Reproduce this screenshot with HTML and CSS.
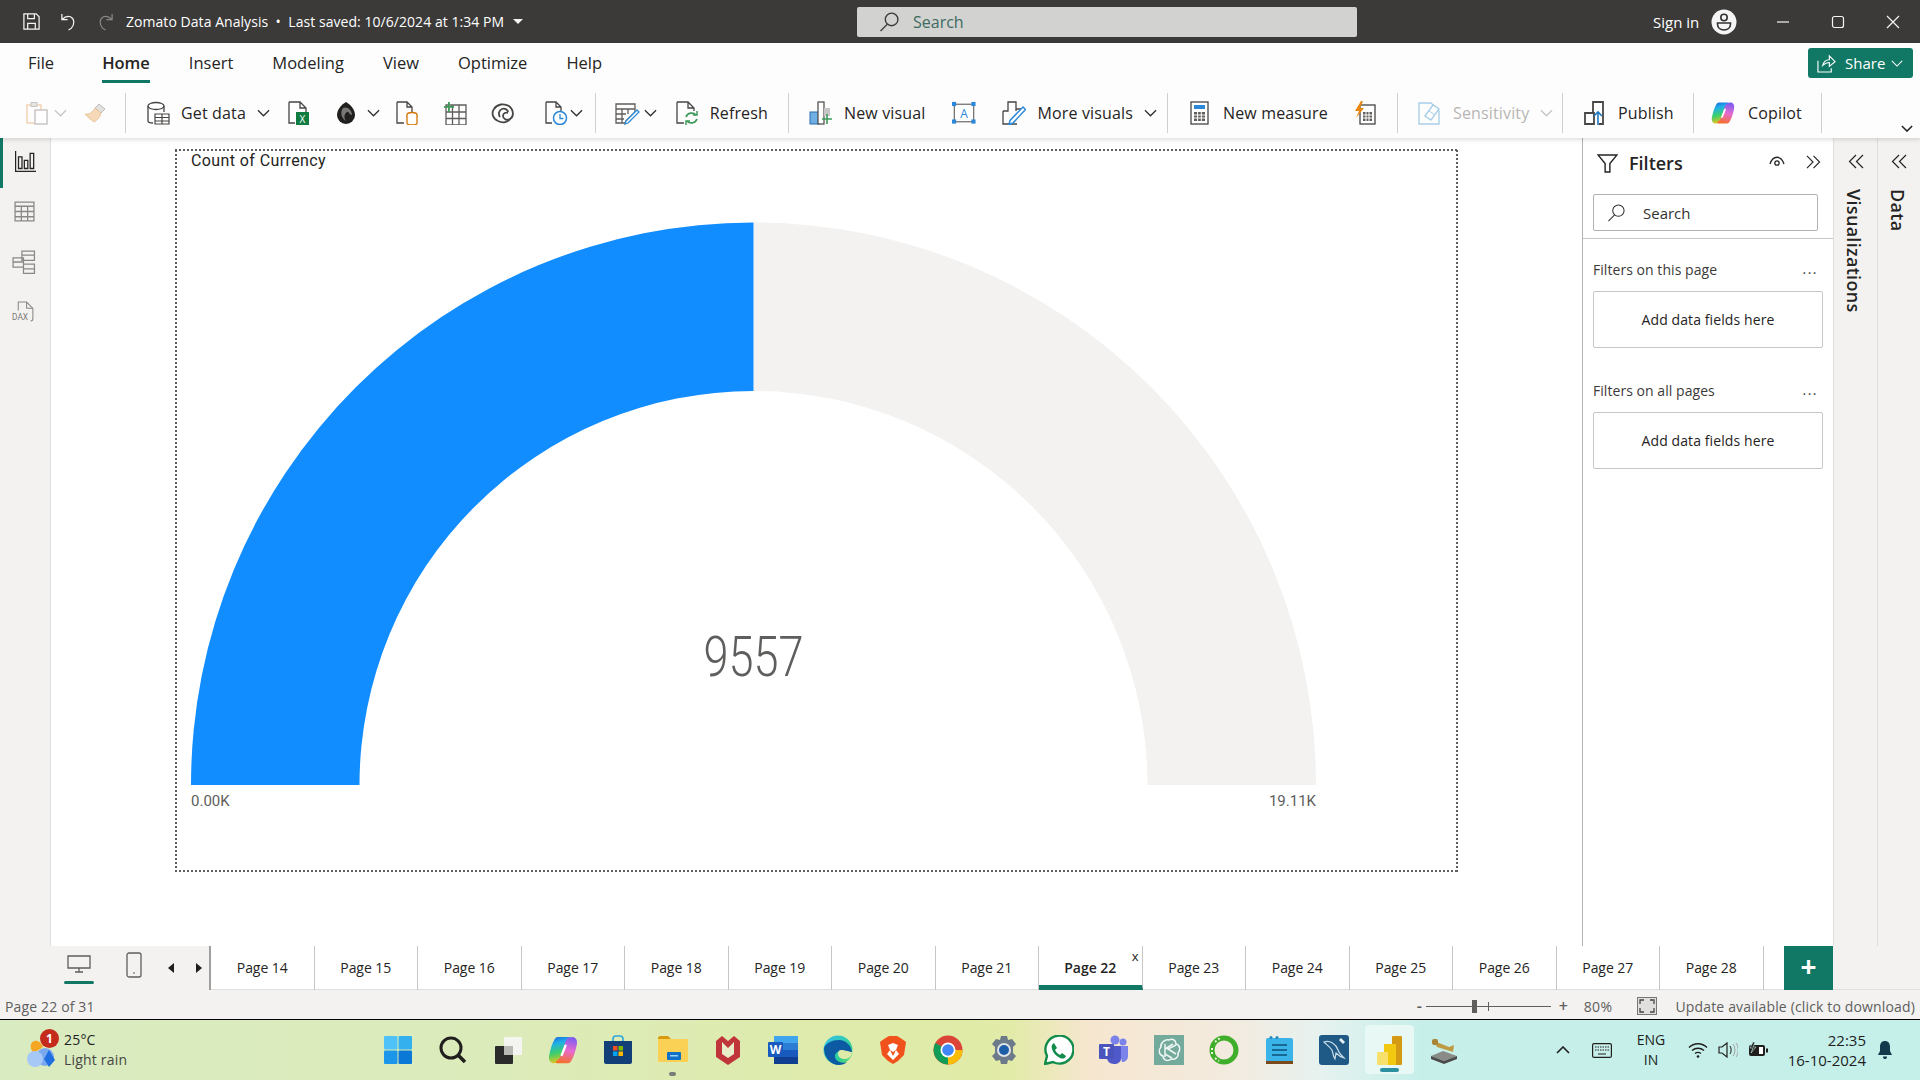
FILE: index.html
```html
<!DOCTYPE html>
<html lang="en">
<head>
    <meta charset="UTF-8">
    <title>Zomato Data Analysis</title>
    <link rel="stylesheet" href="styles.css">
</head>
<body>
    <!-- Title bar -->
    <header class="titlebar">
        <div class="title-left">
            <svg class="ic-save" viewBox="0 0 20 20"><path d="M2 2h13l3 3v13H2zM6 2v5h7V2M6 18v-6h8v6"/></svg>
            <svg class="ic-undo" viewBox="0 0 20 20"><path d="M2 2v6h6M2 8c3-3 6-4 9-3 4 2 5 7 1 12l-3 2"/></svg>
            <svg class="ic-redo" viewBox="0 0 20 20"><path d="M18 2v6h-6M18 8c-3-3-6-4-9-3-4 2-5 7-1 12l3 2"/></svg>
            <span class="doc-title">Zomato Data Analysis &nbsp;•&nbsp; Last saved: 10/6/2024 at 1:34 PM</span>
            <span class="caret"></span>
        </div>
        <div class="top-search">
            <svg viewBox="0 0 20 20"><circle cx="12" cy="8" r="6"/><path d="M8 12.500 1.500 19"/></svg>
            <span>Search</span>
        </div>
        <div class="title-right">
            <span class="signin">Sign in</span>
            <svg class="ic-user" viewBox="0 0 26 26"><circle cx="13" cy="13" r="12.500" fill="#f5f5f5"/><circle cx="13" cy="8.500" r="3.200" fill="none" stroke="#323130" stroke-width="1.600"/><path d="M6.500 14h13v1c0 4-3 6-6.500 6s-6.500-2-6.500-6z" fill="none" stroke="#323130" stroke-width="1.600"/></svg>
            <div class="win-btns">
                <svg viewBox="0 0 14 14"><path d="M1 7h12"/></svg>
                <svg viewBox="0 0 14 14"><rect x="1.500" y="1.500" width="11" height="11" rx="2"/></svg>
                <svg viewBox="0 0 14 14"><path d="M1 1l12 12M13 1 1 13"/></svg>
            </div>
        </div>
    </header>

    <!-- Ribbon -->
    <section class="ribbon">
        <nav class="menu">
            <a class="first">File</a>
            <a class="active">Home</a>
            <a>Insert</a>
            <a>Modeling</a>
            <a>View</a>
            <a>Optimize</a>
            <a>Help</a>
            <button class="share">
                <svg viewBox="0 0 20 20"><path d="M6 12c1-4 4-6 7-6V2l6 6-6 5V9c-3 0-5 1-7 3zM1 7v12h14v-4"/></svg>
                Share
                <svg class="share-chev" viewBox="0 0 14 8"><path d="M1 1l6 6 6-6"/></svg>
            </button>
        </nav>
        <div class="toolbar">
            <div class="group g1">
                <div class="tool close">
                    <svg class="icon" viewBox="0 0 24 24"><path d="M2 4h14v18H2z" fill="none" stroke="#f2d3b3" stroke-width="1.500"/><rect x="6" y="1.500" width="6" height="4" fill="#e6e4e2" stroke="#c8c6c4"/><rect x="10" y="9" width="12" height="14" fill="#fff" stroke="#c8c6c4" stroke-width="1.500"/></svg>
                    <svg class="chev off" viewBox="0 0 14 8"><path d="M1 1l6 6 6-6"/></svg>
                </div>
                <svg class="icon" viewBox="0 0 24 24"><path d="M15 3l6 5-4 4-6-5z" fill="#e3e1df" stroke="#bfbdbb"/><path d="M11 7l6 5c-1 5-4 7-7 9-2-2-6-4-9-8 4 1 8-2 10-6z" fill="#f6d9b8" stroke="#eac49a"/></svg>
            </div>
            <div class="sep near"></div>
            <div class="group g2">
                <div class="tool">
                    <svg class="icon" viewBox="0 0 24 24"><ellipse cx="10" cy="5" rx="8" ry="3.500" fill="#fff" stroke="#484644" stroke-width="1.300"/><path d="M2 5v15c0 1 1 2 5 2M18 5v6" fill="none" stroke="#484644" stroke-width="1.300"/><path d="M9 13h14v10H9zM9 16.500h14M9 20h14M16 13v10" fill="#fff" stroke="#484644" stroke-width="1.200"/></svg>
                    <span>Get data</span>
                    <svg class="chev" viewBox="0 0 14 8"><path d="M1 1l6 6 6-6"/></svg>
                </div>
                <svg class="icon at-excel" viewBox="0 0 24 24"><path d="M3 1h11l6 6v7M3 1v21h6M14 1v6h6" fill="none" stroke="#484644" stroke-width="1.300"/><rect x="10" y="11" width="13" height="13" fill="#107c41"/><text class="ic-text" x="16.500" y="21.500" fill="#fff" font-size="10">X</text></svg>
                <div class="tool tight at-lake">
                    <svg class="icon" viewBox="0 0 24 24"><path d="M12 1c5 3 9 8 9 13a9 9 0 0 1-18 0C3 9 7 4 12 1z" fill="#201f1e"/><path d="M9 7c4-2 9 2 9 7-3 0-3-4-5-3s-4 5-1 9c-5-3-6-9-3-13z" fill="#797775"/></svg>
                    <svg class="chev" viewBox="0 0 14 8"><path d="M1 1l6 6 6-6"/></svg>
                </div>
                <svg class="icon at-sql" viewBox="0 0 24 24"><path d="M2 1h10l5 5v5M2 1v21h7M12 1v5h5" fill="none" stroke="#484644" stroke-width="1.300"/><ellipse cx="17" cy="14" rx="5" ry="2.500" fill="#fff" stroke="#d47500" stroke-width="1.300"/><path d="M12 14v8c0 1 2 2 5 2s5-1 5-2v-8" fill="#fff" stroke="#d47500" stroke-width="1.300"/></svg>
                <svg class="icon at-table" viewBox="0 0 24 24"><path d="M3 4h20v20H3zM3 11h20M3 17.500h20M9.500 4v20M16 4v20" fill="none" stroke="#5f5e5c" stroke-width="1.300"/><rect x="1" y="5" width="10" height="1.800" fill="#3f9a5b"/><rect x="5" y="1" width="1.800" height="10" fill="#3f9a5b"/></svg>
                <svg class="icon at-verse" viewBox="0 0 24 24"><path d="M7 20C2 18 0 12 3 8c3-5 10-6 15-3 5 4 5 11 1 13-3 2-7 0-7-3 0-3 3-4 5-3" fill="none" stroke="#484644" stroke-width="1.800"/><path d="M9 16c-2-3-1-7 2-8 3-1 6 1 6 3M7 20c4 2 9 2 12-2" fill="none" stroke="#484644" stroke-width="1.800"/></svg>
                <div class="tool tighter at-recent">
                    <svg class="icon" viewBox="0 0 24 24"><path d="M2 1h10l5 5v4M2 1v21h6M12 1v5h5" fill="none" stroke="#484644" stroke-width="1.300"/><circle cx="16" cy="17" r="6.500" fill="#fff" stroke="#2b88d8" stroke-width="1.500"/><path d="M16 13v4.500h3.500" fill="none" stroke="#2b88d8" stroke-width="1.300"/></svg>
                    <svg class="chev" viewBox="0 0 14 8"><path d="M1 1l6 6 6-6"/></svg>
                </div>
            </div>
            <div class="sep tight"></div>
            <div class="group g3">
                <svg class="icon wide" viewBox="0 0 26 24"><path d="M2 3h19v8l-9 9-1 2H2zM2 8h19M2 13h10M2 18h8M8 8v14M14 8v5" fill="none" stroke="#605e5c" stroke-width="1.300"/><path d="M23 9l2 2-11 11-3 1 1-3z" fill="#fff" stroke="#2b88d8" stroke-width="1.300"/></svg>
            </div>
            <div class="group g3b">
                <svg class="chev" viewBox="0 0 14 8"><path d="M1 1l6 6 6-6"/></svg>
                <div class="tool">
                    <svg class="icon" viewBox="0 0 24 24"><path d="M2 1h11l6 6v3M2 1v21h7M13 1v6h6" fill="none" stroke="#484644" stroke-width="1.300"/><path d="M11 16a6 6 0 0 1 10-2M22 18a6 6 0 0 1-10 2" fill="none" stroke="#3f9a5b" stroke-width="1.800"/><path d="M22 10v4h-4M11 24v-4h4" fill="none" stroke="#3f9a5b" stroke-width="1.500"/></svg>
                    <span>Refresh</span>
                </div>
            </div>
            <div class="sep"></div>
            <div class="group g4">
                <div class="tool">
                    <svg class="icon" viewBox="0 0 24 24"><rect x="1" y="11" width="9" height="12" fill="#6fb0e4" stroke="#2b6cb0"/><rect x="9" y="1" width="6" height="22" fill="#fff" stroke="#484644" stroke-width="1.200"/><rect x="15" y="7" width="6" height="8" fill="#c8c6c4"/><path d="M18 13v10M13 18h10" stroke="#3f9a5b" stroke-width="1.600"/></svg>
                    <span>New visual</span>
                </div>
                <svg class="icon" viewBox="0 0 26 24"><rect x="2.500" y="2.500" width="21" height="19" fill="#fff" stroke="#605e5c" stroke-width="1.200"/><rect x="0" y="0" width="4.500" height="4.500" fill="#2b88d8"/><rect x="21" y="0" width="4.500" height="4.500" fill="#2b88d8"/><rect x="0" y="19" width="4.500" height="4.500" fill="#2b88d8"/><rect x="21" y="19" width="4.500" height="4.500" fill="#2b88d8"/><text class="ic-text" x="13" y="17" fill="#2b88d8" font-size="13">A</text></svg>
                <div class="tool">
                    <svg class="icon" viewBox="0 0 24 24"><path d="M1 10h5V1h8v9M1 10v13h14M14 8h7" fill="none" stroke="#484644" stroke-width="1.300"/><path d="M21 6l2.500 2.500L11 22l-4 1.500 1-4z" fill="#fff" stroke="#2b88d8" stroke-width="1.500"/></svg>
                    <span>More visuals</span>
                    <svg class="chev" viewBox="0 0 14 8"><path d="M1 1l6 6 6-6"/></svg>
                </div>
            </div>
            <div class="sep tight"></div>
            <div class="group g5">
                <div class="tool">
                    <svg class="icon" viewBox="0 0 20 24"><rect x="1" y="1" width="17" height="22" fill="#fff" stroke="#484644" stroke-width="1.300"/><rect x="4" y="4" width="11" height="4" fill="#2b88d8"/><path d="M4 11h11v9H4z" fill="#605e5c"/><path d="M7.600 11v9M11.300 11v9M4 14h11M4 17h11" stroke="#fff"/></svg>
                    <span>New measure</span>
                </div>
                <svg class="icon" viewBox="0 0 24 24"><rect x="7" y="4" width="15" height="19" fill="#fff" stroke="#484644" stroke-width="1.300"/><path d="M10 11h9v9h-9z" fill="#605e5c"/><path d="M13 11v9M16 11v9M10 14h9M10 17h9" stroke="#fff"/><path d="M8 0 2 10h4l-3 7 8-10H7l3-7z" fill="#e8870f"/></svg>
            </div>
            <div class="sep"></div>
            <div class="group g6">
                <div class="tool dim">
                    <svg class="icon" viewBox="0 0 24 24"><path d="M1 2h12l8 8v13H1z" fill="none" stroke="#a6cde8" stroke-width="1.300"/><path d="M7 15 15 4l6 4-8 11z" fill="#fff" stroke="#a6cde8" stroke-width="1.300"/><path d="M11 10l6 4" stroke="#a6cde8"/></svg>
                    <span>Sensitivity</span>
                    <svg class="chev off" viewBox="0 0 14 8"><path d="M1 1l6 6 6-6"/></svg>
                </div>
            </div>
            <div class="sep tight"></div>
            <div class="group g7">
                <div class="tool">
                    <svg class="icon" viewBox="0 0 24 24"><path d="M10 12V1h10v22h-4M2 12h9v11H2z" fill="#fff" stroke="#484644" stroke-width="1.800"/><path d="M15 24V11M11 15l4-4 4 4" fill="none" stroke="#1f78c1" stroke-width="1.600"/></svg>
                    <span>Publish</span>
                </div>
            </div>
            <div class="sep"></div>
            <div class="group g8">
                <div class="tool wider">
                    <svg class="icon" viewBox="0 0 24 24">
                        <defs>
                            <linearGradient id="cp1" x1="0.300" y1="0" x2="0.500" y2="1"><stop offset="0" stop-color="#1c6fe0"/><stop offset="0.250" stop-color="#1fb0e8"/><stop offset="0.600" stop-color="#3ecf6a"/><stop offset="1" stop-color="#f5c518"/></linearGradient>
                            <linearGradient id="cp2" x1="0.600" y1="0" x2="0.400" y2="1"><stop offset="0" stop-color="#7a5cf0"/><stop offset="0.500" stop-color="#e86ad0"/><stop offset="1" stop-color="#f5702c"/></linearGradient>
                        </defs>
                        <path d="M8 1.500h9c1 0 1 1.500 0 2-2 1-3 3-4 6L10 19c-1 2.500-3 3.500-5.500 3.500S0 20 1 16c1-5 2.500-9.500 4-12 .7-1.500 1.500-2.500 3-2.500z" fill="url(#cp1)"/>
                        <path d="M16 22.500H7c-1 0-1-1.500 0-2 2-1 3-3 4-6L14 5c1-2.500 3-3.500 5.500-3.500S24 4 23 8c-1 5-2.500 9.500-4 12-.7 1.500-1.500 2.500-3 2.500z" fill="url(#cp2)"/>
                        <path d="M14 8.500 11 16" stroke="#fff" stroke-width="1.800" stroke-linecap="round"/>
                    </svg>
                    <span>Copilot</span>
                </div>
            </div>
            <div class="sep"></div>
        </div>
        <svg class="ribbon-collapse" viewBox="0 0 14 8"><path d="M1 1l6 6 6-6"/></svg>
    </section>

    <!-- Main work area -->
    <main class="workarea">
        <aside class="rail">
            <div class="rail-item on">
                <svg viewBox="0 0 18 18"><path d="M.5 0v17.500H18M3 5h3v10H3zM8 8h3v7H8zM13 2h3v13h-3z" fill="none" stroke="#252423" stroke-width="1.100"/></svg>
            </div>
            <div class="rail-item">
                <svg viewBox="0 0 20 20"><path d="M1 1h18v18H1zM1 5h18M1 10h18M1 15h18M7 5v14M13 5v14" fill="none" stroke="#8a8886" stroke-width="1.200"/></svg>
            </div>
            <div class="rail-item">
                <svg class="big" viewBox="0 0 23 23"><path d="M9.500 1h12v9h-12zM9.500 5h12M1 7.500h10v9H1zM1 11.500h10M11 13.500h10.500V22.500H11zM11 18h10.500" fill="#f3f2f1" stroke="#8a8886" stroke-width="1.200"/></svg>
            </div>
            <div class="rail-item">
                <svg class="big" viewBox="0 0 23 21"><path d="M6 9V1h8l6 6v10c0 1-1 2-2 2" fill="none" stroke="#8a8886"/><path d="M14 1v6h6" fill="none" stroke="#8a8886"/><text class="ic-dax" x="0" y="18" fill="#797775">DAX</text></svg>
            </div>
        </aside>
        <div class="canvas">
            <div class="visual">
                <div class="visual-title">Count of Currency</div>
                <div class="gauge">
                    <svg class="gauge-arc" viewBox="0 0 1125 563">
                        <path d="M562.500 .5A562.500 562.500 0 0 1 1125 563H956.500A394 394 0 0 0 562.500 169z" fill="#f3f2f1"/>
                        <path d="M562.500 .5A562.500 562.500 0 0 0 0 563H168.500A394 394 0 0 1 562.500 169z" fill="#118dff"/>
                    </svg>
                    <div class="gauge-value">9557</div>
                </div>
                <div class="gauge-labels"><span>0.00K</span><span>19.11K</span></div>
            </div>
        </div>
        <aside class="filters">
            <div class="filters-head">
                <svg class="ic-funnel" viewBox="0 0 22 20"><path d="M1 1h20l-7.500 9v9h-5v-9z"/></svg>
                <span class="filters-title">Filters</span>
                <svg class="ic-eye" viewBox="0 0 16 10"><path d="M1 8c3-9 11-9 14 0"/><circle cx="8" cy="7" r="2.200"/></svg>
                <svg class="ic-dbl" viewBox="0 0 16 15"><path d="M1 1l6.500 6.500L1 14M8 1l6.500 6.500L8 14"/></svg>
            </div>
            <div class="filter-search">
                <svg viewBox="0 0 20 20"><circle cx="12" cy="8" r="6"/><path d="M8 12.500 1.500 19"/></svg>
                <span>Search</span>
            </div>
            <div class="filter-body">
                <div class="filter-sec">
                    <span>Filters on this page</span><b>...</b>
                </div>
                <div class="drop-box">Add data fields here</div>
                <div class="filter-sec second">
                    <span>Filters on all pages</span><b>...</b>
                </div>
                <div class="drop-box">Add data fields here</div>
            </div>
        </aside>
        <aside class="side-tab viz">
            <svg viewBox="0 0 16 15"><path d="M15 1 8.500 7.500 15 14M8 1 1.500 7.500 8 14"/></svg>
            <span>Visualizations</span>
        </aside>
        <aside class="side-tab data">
            <svg viewBox="0 0 16 15"><path d="M15 1 8.500 7.500 15 14M8 1 1.500 7.500 8 14"/></svg>
            <span>Data</span>
        </aside>
    </main>

    <!-- Page tabs -->
    <div class="pagebar">
        <div class="page-ctrl">
            <div class="layout-btn on">
                <svg viewBox="0 0 24 18"><path d="M1 1h22v12H1zM12 13v4M8 17h8" fill="none" stroke="#605e5c" stroke-width="1.300"/></svg>
            </div>
            <div class="layout-btn phone">
                <svg viewBox="0 0 16 26"><rect x="1" y="1" width="14" height="24" rx="2" fill="none" stroke="#605e5c" stroke-width="1.300"/><path d="M7 21h2" stroke="#605e5c"/></svg>
            </div>
            <span class="arrow left"></span>
            <span class="arrow right"></span>
        </div>
        <div class="tabs">
            <div class="tab">Page 14</div>
            <div class="tab">Page 15</div>
            <div class="tab">Page 16</div>
            <div class="tab">Page 17</div>
            <div class="tab">Page 18</div>
            <div class="tab">Page 19</div>
            <div class="tab">Page 20</div>
            <div class="tab">Page 21</div>
            <div class="tab current">Page 22<i>x</i></div>
            <div class="tab">Page 23</div>
            <div class="tab">Page 24</div>
            <div class="tab">Page 25</div>
            <div class="tab">Page 26</div>
            <div class="tab">Page 27</div>
            <div class="tab">Page 28</div>
        </div>
        <div class="add-page">+</div>
        <div class="pagebar-end"></div>
    </div>

    <!-- Status bar -->
    <footer class="statusbar">
        <span>Page 22 of 31</span>
        <div class="status-right">
            <span class="zoom-sign">-</span>
            <div class="slider"><i class="thumb"></i><i class="tick"></i></div>
            <span class="zoom-sign plus">+</span>
            <span class="zoom-pct">80%</span>
            <svg class="ic-fit" viewBox="0 0 20 18"><rect x="0.500" y="0.500" width="19" height="17" fill="#e1dfdd" stroke="#797775"/><path d="M3 7V3h4M13 3h4v4M17 11v4h-4M7 15H3v-4" fill="none" stroke="#484644" stroke-width="1.300"/></svg>
            <span>Update available (click to download)</span>
        </div>
    </footer>

    <!-- Windows taskbar -->
    <div class="taskbar">
        <div class="weather">
            <svg class="ic-weather" viewBox="0 0 32 36"><path d="M6 12a9 9 0 0 0 3 9l9-6C16 9 9 6 6 12z" fill="#f5a623"/><circle cx="20" cy="25" r="9" fill="#7aa9ee"/><circle cx="10" cy="27" r="8" fill="#a6c8f7"/><path d="M24 18l6 10-6 7-5-8z" fill="#1f6fe0"/></svg>
            <span class="badge">1</span>
            <div class="weather-text">
                <span>25°C</span>
                <span class="sub">Light rain</span>
            </div>
        </div>
        <div class="apps">
            <div class="app"><svg viewBox="0 0 30 30"><rect x="1" y="1" width="13.500" height="13.500" rx="1" fill="#4fc3f7"/><rect x="15.500" y="1" width="13.500" height="13.500" rx="1" fill="#35b0ee"/><rect x="1" y="15.500" width="13.500" height="13.500" rx="1" fill="#1c96e8"/><rect x="15.500" y="15.500" width="13.500" height="13.500" rx="1" fill="#0a78d7"/></svg></div>
            <div class="app"><svg viewBox="0 0 30 30"><circle cx="13" cy="13" r="10" fill="none" stroke="#201f1e" stroke-width="3"/><path d="M20 20l7 7" stroke="#201f1e" stroke-width="3.500"/></svg></div>
            <div class="app"><svg viewBox="0 0 30 30"><rect x="11" y="2" width="18" height="18" rx="1" fill="#f4f4f0"/><rect x="2" y="11" width="18" height="18" rx="1" fill="#2b2b2b"/><rect x="11" y="11" width="9" height="9" fill="#b8b8b4"/></svg></div>
            <div class="app"><svg viewBox="0 0 24 24"><path d="M8 1.500h9c1 0 1 1.500 0 2-2 1-3 3-4 6L10 19c-1 2.500-3 3.500-5.500 3.500S0 20 1 16c1-5 2.500-9.500 4-12 .7-1.500 1.500-2.500 3-2.500z" fill="url(#cp1)"/><path d="M16 22.500H7c-1 0-1-1.500 0-2 2-1 3-3 4-6L14 5c1-2.500 3-3.500 5.500-3.500S24 4 23 8c-1 5-2.500 9.500-4 12-.7 1.500-1.500 2.500-3 2.500z" fill="url(#cp2)"/><path d="M14 8.500 11 16" stroke="#fff" stroke-width="1.800" stroke-linecap="round"/></svg></div>
            <div class="app"><svg viewBox="0 0 30 30"><path d="M10 8V4c0-2 1-3 3-3h4c2 0 3 1 3 3v4" fill="none" stroke="#2aa7e0" stroke-width="1.600"/><path d="M1 6h28v21c0 1-1 2-2 2H3c-1 0-2-1-2-2z" fill="#123f77"/><rect x="10" y="11" width="4.500" height="4.500" fill="#f25022"/><rect x="15.500" y="11" width="4.500" height="4.500" fill="#7fba00"/><rect x="10" y="16.500" width="4.500" height="4.500" fill="#00a4ef"/><rect x="15.500" y="16.500" width="4.500" height="4.500" fill="#ffb900"/></svg></div>
            <div class="app running"><svg viewBox="0 0 30 30"><path d="M0 3c0-1 1-2 2-2h8l3 3H0z" fill="#d99a10"/><path d="M0 4h30v23H0z" fill="#fbd155"/><rect x="9" y="17" width="14" height="8" rx="1" fill="#1170c8"/><rect x="12" y="20" width="8" height="1.500" fill="#9bd0f5"/></svg></div>
            <div class="app"><svg viewBox="0 0 30 30"><path d="M3 6l6-5 6 5 6-5 6 5v16L15 30 3 22z" fill="#c0353a"/><path d="M9 7v12l6 4 6-4V7l-6 6z" fill="#e8ecc8"/></svg></div>
            <div class="app"><svg viewBox="0 0 30 30"><rect x="6" y="1" width="24" height="28" rx="2" fill="#2b7cd3"/><rect x="6" y="1" width="24" height="7" fill="#41a5ee"/><rect x="6" y="15" width="24" height="7" fill="#185abd"/><rect x="6" y="22" width="24" height="7" fill="#103f91"/><rect x="0" y="7" width="15" height="15" rx="1" fill="#185abd"/><text class="ic-text bold" x="7.500" y="19" fill="#fff" font-size="12">W</text></svg></div>
            <div class="app"><svg viewBox="0 0 30 30"><defs><linearGradient id="ed" x1="0" y1="0" x2="1" y2="1"><stop offset="0" stop-color="#35c1f1"/><stop offset="0.700" stop-color="#2fd08f"/><stop offset="1" stop-color="#7fdc6a"/></linearGradient></defs><circle cx="15" cy="15" r="14.500" fill="url(#ed)"/><path d="M1 13c0 10 7 17 15 17 3 0 6-1 8-3-6 2-12-1-12-6 0-3 3-5 6-5 5 0 10 2 11 2 0-7-6-13-13-13C9 5 3 8 1 13z" fill="#0c59a4"/><path d="M29 17c-2 0-7-2-11-2-2 0-3 2-3 4 0 3 3 5 7 5s7-3 7-7z" fill="#dfeaa9"/></svg></div>
            <div class="app"><svg viewBox="0 0 30 30"><path d="M6 4l5-3h8l5 3 4 3-2 13-6 6-5 3-5-3-6-6L2 7z" fill="#f1511b"/><path d="M10 10l5-2 5 2-2 5 3 4-6 6-6-6 3-4z" fill="#fff"/><path d="M12 15l3 2 3-2-3 6z" fill="#f1511b"/></svg></div>
            <div class="app"><svg viewBox="0 0 30 30"><circle cx="15" cy="15" r="14.500" fill="#db4437"/><path d="M15 15 2.400 8A14.500 14.500 0 0 0 15 29.500z" fill="#0f9d58"/><path d="M15 15v14.500A14.500 14.500 0 0 0 29.500 15z" fill="#fbbc05"/><circle cx="15" cy="15" r="7.500" fill="#fff"/><circle cx="15" cy="15" r="5.800" fill="#4285f4"/></svg></div>
            <div class="app"><svg viewBox="0 0 30 30"><path d="M12 1h6l1 4 4-1 4 5-3 3v6l3 3-4 5-4-1-1 4h-6l-1-4-4 1-4-5 3-3v-6L3 9l4-5 4 1z" fill="#6c7a89"/><circle cx="15" cy="15" r="7" fill="#dfe3e6"/><circle cx="15" cy="15" r="5" fill="#1c5fa8"/></svg></div>
            <div class="app"><svg viewBox="0 0 30 30"><path d="M1 29l2-8A14 14 0 1 1 9 27z" fill="#fff" stroke="#128c4b" stroke-width="2.400"/><path d="M10 8l3 5-2 2c1 2 3 4 5 5l2-2 4 3c-1 3-4 3-6 2-4-2-7-5-8-9-1-3 0-5 2-6z" fill="#128c4b"/></svg></div>
            <div class="app"><svg viewBox="0 0 30 30"><circle cx="24" cy="7" r="3.500" fill="#7b83eb"/><circle cx="16" cy="5" r="4.500" fill="#7b83eb"/><path d="M19 11h10v10c0 4-3 6-6 6z" fill="#7b83eb"/><path d="M8 11h14v12c0 4-3 6-7 6s-7-3-7-6z" fill="#5059c9"/><rect x="0" y="9" width="15" height="15" rx="1" fill="#4b53bc"/><text class="ic-text bold" x="7.500" y="21" fill="#fff" font-size="12">T</text></svg></div>
            <div class="app"><svg viewBox="0 0 30 30"><rect width="30" height="30" fill="#74aa9c"/><path d="M15 5c3-2 7 0 7 4 4 1 5 6 2 9 1 4-3 7-7 6-3 3-8 1-8-3-4-1-5-6-2-9-1-4 4-8 8-7zM11 9v10l7 4M19 9l-8 5v8M22 10l-8 4 8 5" fill="none" stroke="#eef6f3" stroke-width="1.500"/></svg></div>
            <div class="app"><svg viewBox="0 0 30 30"><circle cx="15" cy="15" r="12" fill="none" stroke="#3fae2a" stroke-width="5"/><path d="M6 7l5-4M3 13v6M6 23l4 3" stroke="#eaf3d8" stroke-width="2" stroke-dasharray="2 2"/></svg></div>
            <div class="app"><svg viewBox="0 0 30 30"><rect x="2" y="3" width="27" height="25" rx="2" fill="#3ab4e8"/><rect x="2" y="26" width="27" height="3" fill="#7a4a1c"/><circle cx="7" cy="2.500" r="1.500" fill="#2a88b8"/><circle cx="13" cy="2.500" r="1.500" fill="#2a88b8"/><path d="M8 10h15M8 15h15M8 20h15" stroke="#0e4f78" stroke-width="1.600"/></svg></div>
            <div class="app"><svg viewBox="0 0 30 30"><rect width="30" height="30" rx="3" fill="#1e5a85"/><path d="M5 7c6-2 12 2 14 8 1 3 3 5 6 8-4-1-6-3-8-5l-1 6c-2-3-2-6-3-9-2-3-5-5-8-8z" fill="none" stroke="#c9dbe6" stroke-width="1.200"/><path d="M22 3l4 4-2 2-4-4z" fill="#e8f0f4"/></svg></div>
            <div class="app active"><svg viewBox="0 0 30 30"><rect x="18" y="1" width="10" height="29" rx="1" fill="#d59a14"/><rect x="10" y="9" width="12" height="21" rx="1" fill="#f2c811"/><rect x="3" y="17" width="11" height="13" rx="1" fill="#f8e06c"/></svg></div>
            <div class="app"><svg viewBox="0 0 30 30"><path d="M2 21l12-5 14 5-13 5z" fill="#8a8a88"/><path d="M2 21v3l13 5 13-5v-3l-13 5z" fill="#4a4a48"/><path d="M5 6l15 6 5-2-1 7-16-5z" fill="#bf9a42"/><rect x="3" y="4" width="6" height="6" rx="2" fill="#a88434"/></svg></div>
        </div>
        <div class="tray">
            <svg class="ic-up" viewBox="0 0 14 8"><path d="M1 7l6-6 6 6"/></svg>
            <svg class="ic-kbd" viewBox="0 0 20 15"><rect x="0.600" y="0.600" width="18.800" height="13.800" rx="1.500" fill="none" stroke="#201f1e" stroke-width="1.200"/><path d="M3 4h14M3 7h14" stroke="#201f1e" stroke-dasharray="1.500 1"/><path d="M6 11h8" stroke="#201f1e"/></svg>
            <div class="lang"><span>ENG</span><span>IN</span></div>
            <svg class="ic-wifi" viewBox="0 0 20 16"><path d="M1 5.500c5-5 13-5 18 0M4 8.500c3.500-3 8.500-3 12 0M7 11.500c2-1.500 4-1.500 6 0" fill="none" stroke="#201f1e" stroke-width="1.400"/><circle cx="10" cy="14.500" r="1.300" fill="#201f1e"/></svg>
            <svg class="ic-vol" viewBox="0 0 20 16"><path d="M1 5v6h3l5 4V1L4 5z" fill="none" stroke="#201f1e" stroke-width="1.200"/><path d="M12 4c1.500 2 1.500 6 0 8" fill="none" stroke="#201f1e"/><path d="M15 2c2.500 3 2.500 9 0 12M18 1c3 4 3 10 0 14" fill="none" stroke="#a19f9d"/></svg>
            <svg class="ic-batt" viewBox="0 0 20 16"><rect x="1" y="3" width="16" height="11" rx="2" fill="#201f1e"/><rect x="11" y="5" width="4" height="7" fill="#fff"/><rect x="18" y="6.500" width="2" height="4" fill="#201f1e"/><path d="M5 0 2 6h3L3 11l5-6H5l2-5z" fill="#201f1e" stroke="#c5efe9" stroke-width="0.600"/></svg>
            <div class="clock"><span>22:35</span><span>16-10-2024</span></div>
            <svg class="ic-bell" viewBox="0 0 16 20"><path d="M8 1c-3 0-5 2-5 6v4l-2 4h14l-2-4V7c0-4-2-6-5-6z" fill="#123a4a"/><path d="M6 16.500h4c0 2-1 2.500-2 2.500s-2-.5-2-2.500z" fill="#123a4a"/></svg>
        </div>
    </div>
</body>
</html>
```

FILE: styles.css
```css
* {
    box-sizing: border-box;
    margin: 0;
    padding: 0;
}

html, body {
    width: 1920px;
    height: 1080px;
    overflow: hidden;
}

body {
    font-family: 'Open Sans', 'Noto Sans', sans-serif;
    font-size: 14px;
    color: #252423;
    background: #fff;
    display: flex;
    flex-direction: column;
}

svg {
    display: block;
    flex: none;
}

.ic-text {
    font-family: 'Open Sans', sans-serif;
    text-anchor: middle;
}

.ic-text.bold {
    font-weight: 700;
}

.ic-dax {
    font-family: 'Roboto', sans-serif;
    font-size: 8px;
}

/* Title bar */
.titlebar {
    height: 43px;
    background: #3b3a39;
    color: #fff;
    display: flex;
    align-items: center;
    position: relative;
}

.title-left {
    display: flex;
    align-items: center;
    width: 857px;
    padding-left: 22px;
}

.title-left svg {
    width: 19px;
    height: 19px;
    fill: none;
    stroke-width: 1.300;
}

.ic-save {
    stroke: #f5f5f5;
}

.ic-undo {
    stroke: #f5f5f5;
    margin-left: 19px;
}

.ic-redo {
    stroke: #8a8886;
    margin-left: 16px;
}

.doc-title {
    margin-left: 12px;
    letter-spacing: 0.05px;
    white-space: nowrap;
}

.caret {
    margin-left: 9px;
    border-left: 5px solid transparent;
    border-right: 5px solid transparent;
    border-top: 5px solid #f5f5f5;
}

.top-search {
    width: 500px;
    height: 30px;
    background: #d2d2d0;
    border-radius: 2px;
    display: flex;
    align-items: center;
    padding-left: 22px;
    color: #3e6b60;
    font-size: 16px;
}

.top-search svg {
    width: 21px;
    height: 21px;
    fill: none;
    stroke: #3b3a39;
    stroke-width: 1.300;
    margin-right: 13px;
}

.title-right {
    flex: 1;
    display: flex;
    align-items: center;
    padding-left: 296px;
}

.signin {
    font-size: 15px;
}

.ic-user {
    width: 26px;
    height: 26px;
    margin-left: 12px;
}

.win-btns {
    display: flex;
    gap: 41px;
    margin-left: 39px;
}

.win-btns svg {
    width: 14px;
    height: 14px;
    fill: none;
    stroke: #f5f5f5;
    stroke-width: 1.200;
}

/* Ribbon */
.ribbon {
    height: 95px;
    background: #fdfdfd;
    position: relative;
    box-shadow: 0 2px 4px rgba(0, 0, 0, 0.12);
    z-index: 2;
}

.menu {
    height: 40px;
    display: flex;
    align-items: center;
    gap: 39px;
    padding: 0 0 2px 28px;
    font-size: 16.500px;
}

.menu a {
    position: relative;
}

.menu .first {
    margin-right: 9px;
}

.menu .active {
    font-weight: 600;
}

.menu .active::after {
    content: '';
    position: absolute;
    left: 0;
    right: 0;
    top: 29px;
    height: 3px;
    background: #117865;
}

.share {
    margin-left: auto;
    margin-right: 7px;
    width: 105px;
    height: 30px;
    background: #117865;
    color: #fff;
    border: 0;
    border-radius: 3px;
    font-family: inherit;
    font-size: 15px;
    display: flex;
    align-items: center;
    padding-left: 9px;
    gap: 9px;
    position: relative;
    top: 1px;
}

.share svg {
    width: 19px;
    height: 19px;
    fill: none;
    stroke: #fff;
    stroke-width: 1.200;
}

.share .share-chev {
    width: 12px;
    height: 7px;
    margin-left: -3px;
}

.toolbar {
    height: 40px;
    margin-top: 10px;
    display: flex;
    padding-left: 25px;
    font-size: 16px;
    letter-spacing: 0.15px;
}

.group {
    display: flex;
    align-items: center;
    justify-content: space-between;
    height: 100%;
}

.g1 { width: 83px; }
.g2 { width: 439px; justify-content: flex-start; }
.g3 { width: 28px; }
.g3 .icon { margin-left: -2px; }
.g3b { width: 124px; }
.g4 { width: 348px; }
.g5 { width: 189px; }
.g6 { width: 134px; }
.g7 { width: 90px; }
.g8 { width: 90px; margin-left: -3px; }

.at-excel { margin-left: 16px; }
.at-lake { margin-left: 24px; }
.at-sql { margin-left: 15px; }
.at-table { margin-left: 24px; }
.at-verse { margin-left: 24px; }
.at-recent { margin-left: 29px; }

.sep {
    width: 1px;
    height: 100%;
    background: #d2d0ce;
    margin: 0 20px;
}

.sep.near {
    margin-left: 17px;
}

.sep.tight {
    margin-left: 10px;
}

.tool {
    display: flex;
    align-items: center;
    gap: 11px;
    white-space: nowrap;
}

.tool.close {
    gap: 5px;
}

.tool.tight {
    gap: 9px;
}

.tool.tighter {
    gap: 2px;
}

.tool.wider {
    gap: 13px;
}

.tool.dim {
    color: #b8b6b4;
}

.icon {
    width: 24px;
    height: 24px;
}

.icon.wide {
    width: 26px;
}

.chev {
    width: 13px;
    height: 8px;
    fill: none;
    stroke: #323130;
    stroke-width: 1.400;
}

.chev.off {
    stroke: #c8c6c4;
}

.ribbon-collapse {
    position: absolute;
    right: 7px;
    bottom: 6px;
    width: 12px;
    height: 7px;
    fill: none;
    stroke: #252423;
    stroke-width: 1.800;
}

/* Work area */
.workarea {
    height: 808px;
    display: flex;
}

.rail {
    width: 51px;
    background: #f3f2f1;
    border-right: 1px solid #e1dfdd;
}

.rail-item {
    height: 50px;
    display: flex;
    align-items: center;
    justify-content: center;
    padding: 0 2px 3px 0;
}

.rail-item.on {
    border-left: 3px solid #117865;
}

.rail-item svg {
    width: 21px;
    height: 21px;
}

.rail-item svg.big {
    width: 24px;
    height: 24px;
}

.canvas {
    width: 1531px;
    padding: 11px 0 0 124px;
}

.visual {
    width: 1283px;
    height: 723px;
    padding: 0 0 0 16px;
    background:
        repeating-linear-gradient(90deg, #605e5c 0 2px, transparent 2px 4px) top / 100% 2px no-repeat,
        repeating-linear-gradient(90deg, #605e5c 0 2px, transparent 2px 4px) bottom / 100% 2px no-repeat,
        repeating-linear-gradient(0deg, #605e5c 0 2px, transparent 2px 4px) left / 2px 100% no-repeat,
        repeating-linear-gradient(0deg, #605e5c 0 2px, transparent 2px 4px) right / 2px 100% no-repeat;
}

.visual-title {
    height: 73px;
    padding-top: 2px;
    font-family: 'Roboto', sans-serif;
    font-size: 16px;
    letter-spacing: 0.4px;
    line-height: 20px;
}

.gauge {
    width: 1125px;
    height: 563px;
    position: relative;
}

.gauge-arc {
    width: 1125px;
    height: 563px;
}

.gauge-value {
    position: absolute;
    left: 0;
    right: 0;
    top: 400px;
    text-align: center;
    font-family: 'Roboto', sans-serif;
    font-weight: 300;
    font-size: 55px;
    line-height: 70px;
    color: #605e5c;
    transform: scaleX(0.82);
}

.gauge-labels {
    width: 1125px;
    margin-top: 6px;
    display: flex;
    justify-content: space-between;
    font-family: 'Roboto', sans-serif;
    font-size: 15px;
    line-height: 20px;
    color: #605e5c;
}

/* Filters pane */
.filters {
    width: 251px;
    border-left: 1px solid #b3b0ad;
    background: #fff;
}

.filters-head {
    height: 56px;
    display: flex;
    align-items: center;
    padding: 0 12px 6px 14px;
}

.ic-funnel {
    width: 21px;
    height: 19px;
    fill: none;
    stroke: #252423;
    stroke-width: 1.500;
}

.filters-title {
    margin-left: 11px;
    font-size: 18px;
    font-weight: 600;
}

.ic-eye {
    width: 16px;
    height: 10px;
    margin-left: auto;
    margin-bottom: 4px;
    fill: none;
    stroke: #252423;
    stroke-width: 1.300;
}

.ic-dbl {
    width: 15px;
    height: 14px;
    margin-left: 21px;
    margin-bottom: 2px;
    fill: none;
    stroke: #252423;
    stroke-width: 1.200;
}

.filter-search {
    margin-left: 10px;
    width: 225px;
    height: 37px;
    border: 1px solid #b3b0ad;
    border-radius: 2px;
    display: flex;
    align-items: center;
    padding-left: 13px;
    font-size: 15px;
    color: #323130;
}

.filter-search svg {
    width: 19px;
    height: 19px;
    fill: none;
    stroke: #323130;
    stroke-width: 1.100;
    margin-right: 17px;
}

.filter-body {
    margin-top: 7px;
    border-top: 1px solid #c8c6c4;
    padding: 0 10px;
}

.filter-sec {
    margin-top: 21px;
    width: 225px;
    height: 20px;
    display: flex;
    justify-content: space-between;
    font-size: 14px;
    letter-spacing: 0.05px;
    color: #3b3a39;
    line-height: 20px;
}

.filter-sec b {
    font-weight: 400;
    letter-spacing: 1.500px;
    line-height: 18px;
}

.filter-sec.second {
    margin-top: 33px;
}

.drop-box {
    margin-top: 11px;
    width: 230px;
    height: 57px;
    border: 1px solid #c8c6c4;
    border-radius: 2px;
    display: flex;
    align-items: center;
    justify-content: center;
    font-size: 14px;
    letter-spacing: 0.1px;
    color: #252423;
}

.side-tab {
    background: #f3f2f1;
    border-left: 1px solid #e1dfdd;
    display: flex;
    flex-direction: column;
    align-items: center;
    padding-top: 16px;
}

.side-tab svg {
    width: 16px;
    height: 15px;
    fill: none;
    stroke: #252423;
    stroke-width: 1.200;
}

.side-tab span {
    writing-mode: vertical-rl;
    margin-top: 20px;
    margin-right: 3px;
    font-size: 18px;
    font-weight: 600;
    letter-spacing: 0.3px;
}

.side-tab.viz {
    width: 44px;
}

.side-tab.data {
    width: 43px;
}

/* Page tabs */
.pagebar {
    height: 44px;
    display: flex;
    background: #fff;
    border-bottom: 1px solid #e1dfdd;
}

.page-ctrl {
    width: 211px;
    height: 44px;
    background: #f3f2f1;
    border-right: 2px solid #a19f9d;
    display: flex;
    padding-left: 64px;
    position: relative;
}

.layout-btn {
    width: 30px;
    padding: 9px 3px 0;
    position: relative;
}

.layout-btn svg {
    width: 24px;
    height: 18px;
}

.layout-btn.on::after {
    content: '';
    position: absolute;
    left: 0;
    right: 0;
    top: 35px;
    height: 3px;
    border-radius: 2px;
    background: #117865;
}

.layout-btn.phone {
    margin-left: 32px;
    padding: 6px 0 0;
    width: 16px;
}

.layout-btn.phone svg {
    width: 16px;
    height: 26px;
}

.arrow {
    align-self: center;
    border-top: 5px solid transparent;
    border-bottom: 5px solid transparent;
}

.arrow.left {
    margin-left: 26px;
    border-right: 6px solid #201f1e;
}

.arrow.right {
    margin-left: 22px;
    border-left: 6px solid #201f1e;
}

.tabs {
    display: flex;
    width: 1553px;
}

.tab {
    width: 103.500px;
    height: 44px;
    padding-bottom: 2px;
    border-right: 1px solid #c8c6c4;
    display: flex;
    align-items: center;
    justify-content: center;
    font-size: 14px;
    letter-spacing: -0.05px;
    color: #252423;
    position: relative;
}

.tab.current {
    font-weight: 600;
    border-bottom: 5px solid #117865;
    padding: 3px 0 0;
}

.tab.current i {
    position: absolute;
    right: 3px;
    top: 2px;
    font-style: normal;
    font-weight: 400;
    font-size: 13px;
    line-height: 16px;
}

.add-page {
    width: 49px;
    margin-left: 20px;
    height: 44px;
    background: #117865;
    color: #fff;
    font-size: 28px;
    font-weight: 700;
    line-height: 41px;
    text-align: center;
}

.pagebar-end {
    flex: 1;
    background: #f3f2f1;
}

/* Status bar */
.statusbar {
    height: 29px;
    background: #f3f2f1;
    display: flex;
    align-items: center;
    justify-content: space-between;
    padding: 3px 5px 0;
    font-size: 14px;
    letter-spacing: 0.15px;
    color: #605e5c;
}

.status-right {
    display: flex;
    align-items: center;
}

.zoom-sign {
    font-size: 16px;
    width: 9px;
    font-weight: 600;
}

.zoom-sign.plus {
    width: 16px;
    margin-left: 8px;
}

.slider {
    width: 125px;
    height: 1px;
    background: #605e5c;
    position: relative;
}

.thumb {
    position: absolute;
    left: 46px;
    top: -6px;
    width: 5px;
    height: 13px;
    background: #605e5c;
}

.tick {
    position: absolute;
    left: 62px;
    top: -4px;
    width: 1px;
    height: 9px;
    background: #605e5c;
}

.zoom-pct {
    margin-left: 9px;
    letter-spacing: 0.4px;
}

.ic-fit {
    width: 20px;
    height: 18px;
    margin: 0 18px 0 25px;
}

/* Taskbar */
.taskbar {
    height: 61px;
    border-top: 1px solid #000;
    display: flex;
    background: linear-gradient(90deg, #d9ebc0 0, #dcebba 500px, #dfeba9 900px, #e2eba8 1010px, #f6e6cf 1090px, #f2ebe0 1240px, #e6f2ef 1320px, #c7efea 1420px, #c5efe9 100%);
    color: #201f1e;
}

.weather {
    width: 370px;
    display: flex;
    align-items: center;
    padding-left: 25px;
    position: relative;
}

.ic-weather {
    width: 32px;
    height: 36px;
}

.badge {
    position: absolute;
    left: 40px;
    top: 9px;
    width: 19px;
    height: 19px;
    border-radius: 50%;
    background: #c42b1c;
    color: #fff;
    font-size: 12px;
    font-weight: 700;
    line-height: 19px;
    text-align: center;
}

.weather-text {
    margin-left: 7px;
    display: flex;
    flex-direction: column;
    line-height: 20px;
    letter-spacing: 0.2px;
}

.weather-text .sub {
    color: #484644;
}

.apps {
    display: flex;
    width: 1102px;
}

.app {
    width: 55.100px;
    display: flex;
    align-items: center;
    justify-content: center;
    position: relative;
}

.app svg {
    width: 30px;
    height: 30px;
}

.app.running::after {
    content: '';
    position: absolute;
    left: 24px;
    bottom: 4px;
    width: 7px;
    height: 4px;
    border-radius: 2px;
    background: #7a7a78;
}

.app.active {
    background: #e8f8f5;
    border-radius: 4px;
    margin: 5px 3px 6px;
    width: 49px;
}

.app.active::after {
    content: '';
    position: absolute;
    left: 15px;
    bottom: 2px;
    width: 19px;
    height: 4px;
    border-radius: 2px;
    background: #2a8f9f;
}

.tray {
    flex: 1;
    display: flex;
    align-items: center;
    padding-left: 84px;
    position: relative;
}

.ic-up {
    width: 14px;
    height: 8px;
    fill: none;
    stroke: #201f1e;
    stroke-width: 1.600;
}

.ic-kbd {
    width: 20px;
    height: 15px;
    margin-left: 22px;
}

.lang {
    width: 30px;
    margin-left: 24px;
    display: flex;
    flex-direction: column;
    align-items: center;
    line-height: 20px;
}

.ic-wifi, .ic-vol, .ic-batt {
    width: 20px;
    height: 16px;
}

.ic-wifi {
    margin-left: 22px;
}

.ic-vol, .ic-batt {
    margin-left: 10px;
}

.clock {
    width: 98px;
    display: flex;
    flex-direction: column;
    align-items: flex-end;
    font-size: 15px;
    line-height: 20px;
}

.ic-bell {
    width: 16px;
    height: 20px;
    margin-left: 11px;
}
```
